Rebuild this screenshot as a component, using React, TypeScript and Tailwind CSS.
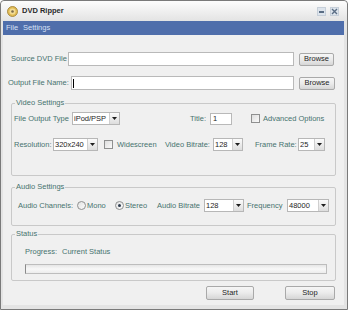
import React from "react";

const label = "text-[#47736f] whitespace-nowrap leading-[10px]";

function Select({ value, className }: { value: string; className: string }) {
  return (
    <div className={`${className} h-[13px] flex items-stretch bg-white border border-[#b7b7b7]`}>
      <span className="flex-1 pl-[1px] text-[#1e1e1e] leading-[11px] overflow-hidden whitespace-nowrap">
        {value}
      </span>
      <span className="w-[10px] flex items-center justify-center border-l border-[#cfcfcf] bg-linear-to-b from-[#fbfbfb] to-[#dddddd]">
        <svg width="5" height="3" viewBox="0 0 5 3">
          <path d="M0 0h5L2.5 3z" fill="#1e1e1e" />
        </svg>
      </span>
    </div>
  );
}

function Button({ text, className }: { text: string; className: string }) {
  return (
    <div
      className={`${className} flex items-center justify-center rounded-[2px] border border-[#a9a9a9] bg-linear-to-b from-[#f6f6f6] via-[#ebebeb] to-[#d6d6d6] text-[#1e1e1e] leading-[10px]`}
    >
      {text}
    </div>
  );
}

function Check() {
  return (
    <span className="w-[9px] h-[9px] border border-[#8f9090] bg-linear-to-br from-[#dedede] to-[#fafafa]" />
  );
}

function Radio({ on }: { on?: boolean }) {
  return (
    <span className="w-[9px] h-[9px] rounded-full border border-[#8f9090] bg-linear-to-br from-[#e2e2e2] to-[#fbfbfb] flex items-center justify-center">
      {on && <span className="w-[3px] h-[3px] rounded-full bg-[#2e3b4e]" />}
    </span>
  );
}

function Group({
  title,
  className,
  children,
}: {
  title: string;
  className: string;
  children: React.ReactNode;
}) {
  return (
    <fieldset
      className={`${className} ml-[8px] w-[325px] border border-[#c9c9c9] rounded-[2px] pl-[2px]`}
    >
      <legend className="ml-[1px] px-[1px] text-[#47736f] leading-[10px]">{title}</legend>
      {children}
    </fieldset>
  );
}

export default function App() {
  return (
    <div className="w-[350px] h-[312px] bg-white font-['Liberation_Sans',Arial,sans-serif] text-[7.5px]">
      <div className="w-[348px] h-[310px] border border-[#7a7a7a] rounded-t-[4px] bg-[#e4e4e4] flex flex-col">
        {/* Title bar */}
        <div className="h-[20px] flex items-center bg-linear-to-b from-[#fdfdfd] to-[#e3e3e3] rounded-t-[4px]">
          <svg width="11" height="11" viewBox="0 0 11 11" className="ml-[6px]">
            <circle cx="5.5" cy="5.5" r="5" fill="#e2bd56" stroke="#9c7a2a" strokeWidth="0.8" />
            <circle cx="5.5" cy="5.5" r="3" fill="#f3dc94" />
            <circle cx="5.5" cy="5.5" r="1.3" fill="#7b6a4a" />
          </svg>
          <span className="ml-[4px] text-[#2a2a2a] font-bold text-[7.5px] leading-[10px]">DVD Ripper</span>
          <div className="ml-auto mr-[8px] flex gap-[4px]">
            <span className="w-[9px] h-[9px] flex items-end justify-center pb-[2px] bg-[#dde4ec] border border-[#c6cfd9]">
              <span className="w-[5px] h-[2px] bg-[#5a6d84]" />
            </span>
            <span className="w-[9px] h-[9px] flex items-center justify-center bg-[#dde4ec] border border-[#c6cfd9]">
              <svg width="7" height="7" viewBox="0 0 7 7">
                <path d="M1 1l5 5M6 1L1 6" stroke="#5a6d84" strokeWidth="1.4" />
              </svg>
            </span>
          </div>
        </div>

        {/* Client area */}
        <div className="ml-[2px] mr-[3px] h-[284px] flex flex-col bg-[#f0f0f0]">
          {/* Menu */}
          <div className="h-[14px] flex items-center bg-[#4f6eab] text-[#d6e0f5] leading-[10px]">
            <span className="ml-[3px]">File</span>
            <span className="ml-[5px]">Settings</span>
          </div>

          {/* Source row */}
          <div className="mt-[17px] pl-[8px] flex items-center h-[14px]">
            <span className={`${label} w-[57px]`}>Source DVD File</span>
            <span className="w-[226px] h-[14px] bg-white border border-[#b9b9b9]" />
            <Button text="Browse" className="ml-[5px] w-[35px] h-[13px]" />
          </div>

          {/* Output row */}
          <div className="mt-[10px] pl-[5px] flex items-center h-[14px]">
            <span className={`${label} w-[63px]`}>Output File Name:</span>
            <span className="w-[223px] h-[14px] bg-white border border-[#b9b9b9] flex items-center">
              <span className="ml-[1px] w-[1px] h-[9px] bg-black" />
            </span>
            <Button text="Browse" className="ml-[5px] w-[36px] h-[13px]" />
          </div>

          {/* Video settings */}
          <Group title="Video Settings" className="mt-[8px] pb-[24px]">
            <div className="mt-[4px] flex items-center h-[13px]">
              <span className={`${label} w-[58px]`}>File Output Type</span>
              <Select value="iPod/PSP" className="w-[48px]" />
              <span className={`${label} ml-[70px] w-[20px]`}>Title:</span>
              <span className="w-[22px] h-[12px] bg-white border border-[#b9b9b9] pl-[2px] leading-[10px] text-[#1e1e1e]">
                1
              </span>
              <span className="ml-[19px] flex">
                <Check />
              </span>
              <span className={`${label} ml-[3px]`}>Advanced Options</span>
            </div>
            <div className="mt-[13px] flex items-center h-[13px]">
              <span className={`${label} w-[39px]`}>Resolution:</span>
              <Select value="320x240" className="w-[45px]" />
              <span className="ml-[6px] flex">
                <Check />
              </span>
              <span className={`${label} ml-[4px] w-[48px]`}>Widescreen</span>
              <span className={`${label} w-[48px]`}>Video Bitrate:</span>
              <Select value="128" className="w-[30px]" />
              <span className={`${label} ml-[12px] w-[43px]`}>Frame Rate:</span>
              <Select value="25" className="w-[27px]" />
            </div>
          </Group>

          {/* Audio settings */}
          <Group title="Audio Settings" className="mt-[6px] pb-[13px]">
            <div className="mt-[7px] ml-[4px] flex items-center h-[13px]">
              <span className={`${label} w-[59px]`}>Audio Channels:</span>
              <Radio />
              <span className={`${label} ml-[1px] w-[28px]`}>Mono</span>
              <Radio on />
              <span className={`${label} ml-[1px] w-[32px]`}>Stereo</span>
              <span className={`${label} w-[47px]`}>Audio Bitrate</span>
              <Select value="128" className="w-[40px]" />
              <span className={`${label} ml-[3px] w-[40px]`}>Frequency</span>
              <Select value="48000" className="w-[42px]" />
            </div>
          </Group>

          {/* Status */}
          <Group title="Status" className="mt-[3px] pb-[6px]">
            <div className="mt-[8px] ml-[11px] flex items-center h-[10px]">
              <span className={`${label} w-[37px]`}>Progress:</span>
              <span className={label}>Current Status</span>
            </div>
            <div className="mt-[7px] ml-[11px] w-[302px] h-[10px] border border-[#bdbdbd] border-l-[#8a8a8a] bg-linear-to-b from-[#e6e6e6] via-[#f8f8f8] to-[#ececec]" />
          </Group>

          {/* Buttons */}
          <div className="mt-[5px] flex">
            <Button text="Start" className="ml-[203px] w-[48px] h-[14px]" />
            <Button text="Stop" className="ml-[31px] w-[50px] h-[14px]" />
          </div>
        </div>
      </div>
    </div>
  );
}
